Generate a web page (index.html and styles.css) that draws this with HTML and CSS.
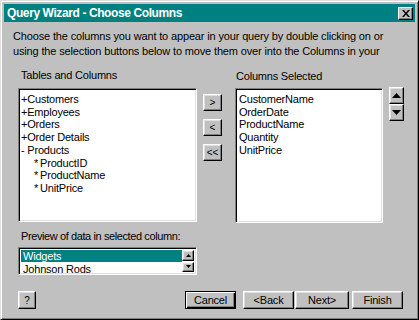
FILE: index.html
```html
<!DOCTYPE html>
<html lang="en">
<head>
    <meta charset="UTF-8">
    <title>Query Wizard - Choose Columns</title>
    <link rel="stylesheet" href="styles.css">
</head>
<body>
    <div class="window">
        <div class="title-bar">
            <span class="title-text">Query Wizard - Choose Columns</span>
            <button class="close-btn" aria-label="Close">
                <svg width="8" height="7" viewBox="0 0 8 7">
                    <path d="M0 0h2l2 2.5L6 0h2L5 3.5 8 7H6L4 4.5 2 7H0l3-3.5z" fill="#000"/>
                </svg>
            </button>
        </div>

        <div class="content">
            <p class="intro">
                Choose the columns you want to appear in your query by double clicking on or<br>
                using the selection buttons below to move them over into the Columns in your
            </p>

            <div class="main">
                <div class="left-col">
                    <div class="label">Tables and Columns</div>
                    <ul class="listbox tables">
                        <li>+Customers</li>
                        <li>+Employees</li>
                        <li>+Orders</li>
                        <li>+Order Details</li>
                        <li>- Products</li>
                        <li class="field"><span class="star">*</span>ProductID</li>
                        <li class="field"><span class="star">*</span>ProductName</li>
                        <li class="field"><span class="star">*</span>UnitPrice</li>
                    </ul>

                    <div class="label preview-label">Preview of data in selected column:</div>
                    <div class="listbox preview">
                        <ul class="preview-items">
                            <li class="selected">Widgets</li>
                            <li>Johnson Rods</li>
                        </ul>
                        <div class="mini-scroll">
                            <button class="btn mini-btn" aria-label="Up">
                                <svg width="5" height="3" viewBox="0 0 5 3"><path d="M2.5 0L5 3H0z" fill="#000"/></svg>
                            </button>
                            <button class="btn mini-btn" aria-label="Down">
                                <svg width="5" height="3" viewBox="0 0 5 3"><path d="M0 0h5L2.5 3z" fill="#000"/></svg>
                            </button>
                        </div>
                    </div>
                </div>

                <div class="move-col">
                    <button class="btn move-btn">&gt;</button>
                    <button class="btn move-btn">&lt;</button>
                    <button class="btn move-btn">&lt;&lt;</button>
                </div>

                <div class="right-col">
                    <div class="label">Columns Selected</div>
                    <ul class="listbox selected-cols">
                        <li>CustomerName</li>
                        <li>OrderDate</li>
                        <li>ProductName</li>
                        <li>Quantity</li>
                        <li>UnitPrice</li>
                    </ul>
                </div>

                <div class="order-col">
                    <button class="btn order-btn" aria-label="Move up">
                        <svg width="9" height="5" viewBox="0 0 9 5"><path d="M4.5 0L9 5H0z" fill="#000"/></svg>
                    </button>
                    <button class="btn order-btn" aria-label="Move down">
                        <svg width="9" height="5" viewBox="0 0 9 5"><path d="M0 0h9L4.5 5z" fill="#000"/></svg>
                    </button>
                </div>
            </div>

            <div class="footer">
                <button class="btn help-btn">?</button>
                <div class="nav">
                    <button class="btn nav-btn default">Cancel</button>
                    <button class="btn nav-btn back">&lt;Back</button>
                    <button class="btn nav-btn next">Next&gt;</button>
                    <button class="btn nav-btn finish">Finish</button>
                </div>
            </div>
        </div>
    </div>
</body>
</html>
```

FILE: styles.css
```css
* {
    margin: 0;
    padding: 0;
    box-sizing: border-box;
}

body {
    font-family: 'Liberation Sans', Arial, sans-serif;
    font-size: 11px;
    letter-spacing: -0.2px;
    color: #000;
    background: #c0c0c0;
}

/* window frame */
.window {
    width: 419px;
    height: 320px;
    background: #c0c0c0;
    border: 1px solid;
    border-color: #dfdfdf #000 #000 #dfdfdf;
    box-shadow: inset 1px 1px #fff, inset -1px -1px #808080;
    padding: 3px;
}

.title-bar {
    height: 18px;
    background: #008080;
    display: flex;
    align-items: center;
    justify-content: space-between;
    padding: 0 2px 0 3px;
}

.title-text {
    color: #fff;
    font-weight: bold;
    font-size: 12px;
    letter-spacing: -0.4px;
    white-space: nowrap;
}

.close-btn {
    width: 15px;
    height: 13px;
    background: #c0c0c0;
    border: 1px solid;
    border-color: #fff #000 #000 #fff;
    box-shadow: inset -1px -1px #808080;
    display: flex;
    align-items: center;
    justify-content: center;
}

/* generic 3d button */
.btn {
    font-family: inherit;
    font-size: 11px;
    letter-spacing: inherit;
    color: #000;
    background: #c0c0c0;
    border: 1px solid;
    border-color: #fff #000 #000 #fff;
    box-shadow: inset -1px -1px #808080, inset 1px 1px #dfdfdf;
    display: flex;
    align-items: center;
    justify-content: center;
}

.content {
    padding: 7px 0 0 9px;
}

.intro {
    line-height: 15px;
    white-space: nowrap;
    letter-spacing: -0.15px;
}

.main {
    display: flex;
    margin-top: 9px;
    margin-left: 5px;
}

.label {
    height: 15px;
    line-height: 15px;
    padding-left: 3px;
    white-space: nowrap;
}

.listbox {
    list-style: none;
    background: #fff;
    border: 1px solid;
    border-color: #808080 #fff #fff #808080;
    box-shadow: inset 1px 1px #000, inset -1px -1px #dfdfdf;
    line-height: 12.7px;
    white-space: nowrap;
}

.left-col {
    width: 179px;
}

.tables {
    margin-top: 5px;
    height: 134px;
    padding: 4px 2px;
}

.tables .field {
    padding-left: 13px;
}

.star {
    margin-right: 2px;
}

.preview-label {
    margin-top: 7px;
    letter-spacing: -0.4px;
}

.preview {
    margin-top: 3px;
    height: 28px;
    display: flex;
    padding: 2px;
}

.preview-items {
    list-style: none;
    flex: 1;
}

.preview-items li {
    height: 12px;
    line-height: 12px;
    padding-left: 2px;
    margin-bottom: 1px;
}

.preview-items .selected {
    background: #008080;
    color: #fff;
}

.mini-scroll {
    width: 12px;
    display: flex;
    flex-direction: column;
    gap: 1px;
}

.mini-btn {
    height: 12px;
    width: 12px;
}

.move-col {
    display: flex;
    flex-direction: column;
    gap: 8px;
    margin: 26px 0 0 6px;
}

.move-btn {
    width: 19px;
    height: 17px;
    font-size: 10px;
    letter-spacing: 0;
}

.right-col {
    margin-left: 13px;
    width: 148px;
}

.right-col .label {
    margin-top: 1px;
    padding-left: 1px;
}

.selected-cols {
    margin-top: 4px;
    height: 135px;
    padding: 4px 3px;
}

.order-col {
    display: flex;
    flex-direction: column;
    margin: 19px 0 0 6px;
}

.order-btn {
    width: 15px;
    height: 17px;
}

/* bottom row */
.footer {
    display: flex;
    align-items: center;
    justify-content: space-between;
    margin: 16px 0 0 5px;
    width: 385px;
}

.help-btn {
    width: 18px;
    height: 18px;
    font-size: 10px;
}

.nav {
    display: flex;
}

.nav-btn {
    height: 18px;
    width: 51px;
}

.nav-btn.default {
    border-color: #000;
    box-shadow: inset 1px 1px #fff, inset -1px -1px #000, inset -2px -2px #808080;
}

.nav-btn.back {
    margin-left: 7px;
}

.nav-btn.next {
    margin-left: 1px;
    width: 54px;
}

.nav-btn.finish {
    margin-left: 3px;
}
```
